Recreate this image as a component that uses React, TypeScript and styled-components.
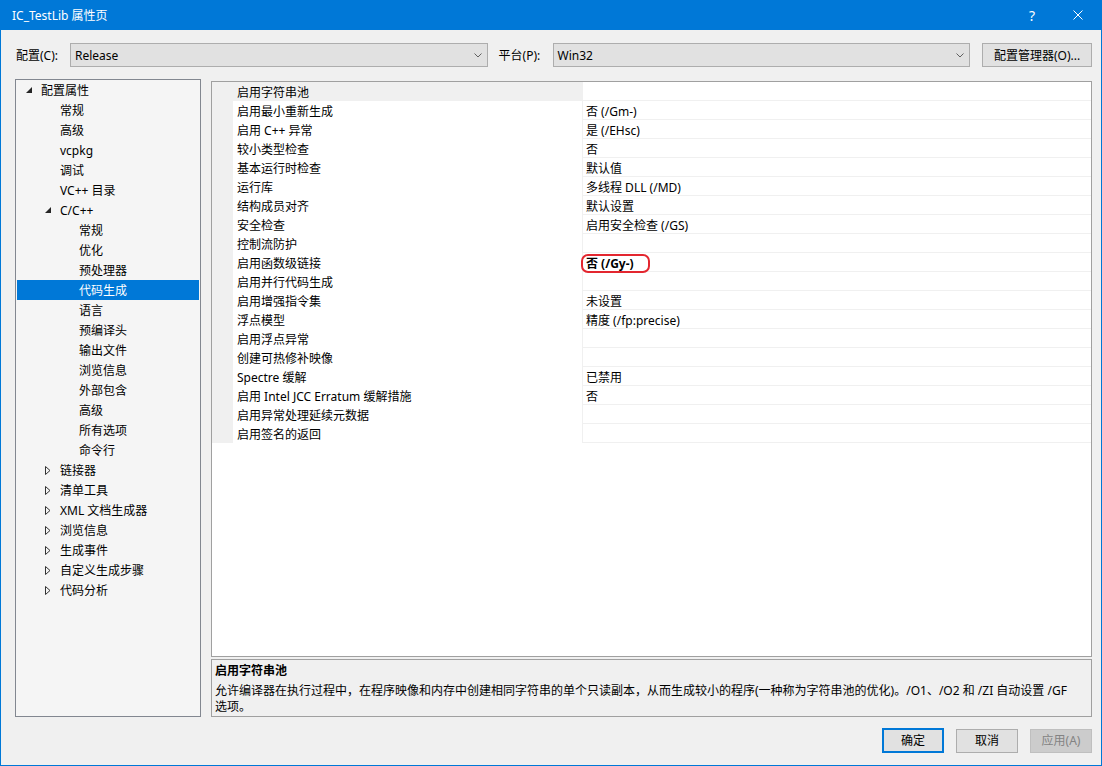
import React from "react";
import styled, { createGlobalStyle } from "styled-components";

const GlobalStyle = createGlobalStyle`
  html, body { margin: 0; padding: 0; }
  body {
    font-family: "Noto Sans", "Noto Sans CJK SC", sans-serif;
    font-size: 12px;
    color: #000;
    background: #ffffff;
  }
  #root { width: 1102px; height: 766px; }
  * { box-sizing: border-box; }
`;

const Window = styled.div`
  width: 1102px;
  height: 766px;
  border: 1px solid #0078d7;
  border-top: none;
  background: #f0f0f0;
  display: flex;
  flex-direction: column;
  overflow: hidden;
`;

const TitleBar = styled.div`
  height: 30px;
  flex: 0 0 30px;
  background: #0078d7;
  color: #fff;
  display: flex;
  align-items: center;
  padding-left: 11px;
`;

const TitleText = styled.div`
  flex: 1;
  font-size: 12px;
  line-height: 16px;
  padding-top: 1px;
`;

const CaptionButton = styled.div`
  width: 46px;
  height: 30px;
  display: flex;
  align-items: center;
  justify-content: center;
  color: #fff;
  font-size: 14px;
`;

const Body = styled.div`
  flex: 1;
  display: flex;
  flex-direction: column;
  padding: 13px 9px 0 14px;
`;

const ConfigRow = styled.div`
  display: flex;
  align-items: center;
  height: 24px;
`;

const FieldLabel = styled.div<{ $w: number }>`
  width: ${(p) => p.$w}px;
  line-height: 16px;
  padding: 2px 0 0 1px;
`;

const Combo = styled.div<{ $w: number }>`
  width: ${(p) => p.$w}px;
  height: 24px;
  background: #e1e1e1;
  border: 1px solid #adadad;
  display: flex;
  align-items: center;
  padding: 0 5px 0 4px;
`;

const ComboText = styled.div`
  flex: 1;
  line-height: 16px;
  padding-top: 2px;
`;

const Spacer = styled.div<{ $w: number }>`
  width: ${(p) => p.$w}px;
`;

const Button = styled.div<{ $w: number; $default?: boolean; $disabled?: boolean }>`
  width: ${(p) => p.$w}px;
  height: ${(p) => (p.$default ? 25 : 24)}px;
  background: ${(p) => (p.$disabled ? "#cccccc" : "#e1e1e1")};
  border: ${(p) =>
    p.$default ? "2px solid #0078d7" : p.$disabled ? "1px solid #bfbfbf" : "1px solid #adadad"};
  color: ${(p) => (p.$disabled ? "#838383" : "#000")};
  display: flex;
  align-items: center;
  justify-content: center;
  line-height: 16px;
  padding-top: 1px;
`;

const Main = styled.div`
  margin-top: 12px;
  height: 638px;
  display: flex;
  gap: 10px;
`;

const TreePanel = styled.div`
  width: 186px;
  height: 638px;
  background: #f5f5f5;
  border: 1px solid #828790;
  padding: 0 1px;
`;

const TreeItem = styled.div<{ $level: number; $selected?: boolean }>`
  height: 20px;
  display: flex;
  align-items: flex-start;
  padding-left: ${(p) => 9 + p.$level * 19}px;
  background: ${(p) => (p.$selected ? "#0078d7" : "transparent")};
  color: ${(p) => (p.$selected ? "#fff" : "#000")};
  white-space: nowrap;
`;

const ArrowSlot = styled.div`
  width: 15px;
  height: 20px;
  display: flex;
  align-items: center;
`;

const ItemText = styled.span`
  line-height: 16px;
  padding-top: 3px;
`;

const RightColumn = styled.div`
  width: 881px;
  margin-top: 2px;
  display: flex;
  flex-direction: column;
`;

const GridPanel = styled.div`
  height: 576px;
  border: 1px solid #a0a0a0;
  background: #fff;
  display: flex;
  align-items: flex-start;
`;

const Gutter = styled.div<{ $rows: number }>`
  width: 21px;
  background: #f0f0f0;
  height: ${(p) => p.$rows * 19}px;
`;

const Rows = styled.div`
  flex: 1;
  display: flex;
  flex-direction: column;
`;

const Row = styled.div`
  display: grid;
  grid-template-columns: 350px 1fr;
  height: 19px;
  border-bottom: 1px solid #f0f0f0;
`;

const NameCell = styled.div<{ $selected?: boolean }>`
  padding: 3px 0 0 4px;
  border-right: 1px solid #f0f0f0;
  background: ${(p) => (p.$selected ? "#f0f0f0" : "#fff")};
  line-height: 16px;
  white-space: nowrap;
`;

const ValueCell = styled.div`
  padding: 3px 0 0 3px;
  line-height: 16px;
  white-space: nowrap;
`;

const Highlight = styled.span`
  display: inline-flex;
  align-items: center;
  height: 19px;
  margin: -3px 0 0 -5px;
  padding: 1px 14px 0 3px;
  border: 2px solid #e3262f;
  border-radius: 7px;
  font-weight: bold;
`;

const DescPanel = styled.div`
  margin-top: 2px;
  height: 58px;
  border: 1px solid #a0a0a0;
  background: #f0f0f0;
  padding: 2px 0 0 3px;
`;

const DescTitle = styled.div`
  font-weight: bold;
  line-height: 18px;
`;

const DescText = styled.div`
  margin-top: 3px;
  line-height: 16px;
  white-space: nowrap;
`;

const ButtonRow = styled.div`
  margin-top: 11px;
  display: flex;
  justify-content: flex-end;
  align-items: center;
  gap: 12px;
`;

const Chevron = () => (
  <svg width="8" height="5" viewBox="0 0 8 5">
    <polyline points="0.5,0.5 4,4 7.5,0.5" fill="none" stroke="#606060" strokeWidth="1" />
  </svg>
);

const OpenArrow = ({ color }: { color: string }) => (
  <svg width="6" height="6" viewBox="0 0 6 6">
    <polygon points="6,0 6,6 0,6" fill={color} />
  </svg>
);

const ClosedArrow = ({ color }: { color: string }) => (
  <svg width="6" height="9" viewBox="0 0 6 9">
    <polygon points="0.5,0.5 5,4.5 0.5,8.5" fill="none" stroke={color} strokeWidth="1" />
  </svg>
);

type TreeNode = { label: string; level: number; arrow?: "open" | "closed"; selected?: boolean };

const tree: TreeNode[] = [
  { label: "配置属性", level: 0, arrow: "open" },
  { label: "常规", level: 1 },
  { label: "高级", level: 1 },
  { label: "vcpkg", level: 1 },
  { label: "调试", level: 1 },
  { label: "VC++ 目录", level: 1 },
  { label: "C/C++", level: 1, arrow: "open" },
  { label: "常规", level: 2 },
  { label: "优化", level: 2 },
  { label: "预处理器", level: 2 },
  { label: "代码生成", level: 2, selected: true },
  { label: "语言", level: 2 },
  { label: "预编译头", level: 2 },
  { label: "输出文件", level: 2 },
  { label: "浏览信息", level: 2 },
  { label: "外部包含", level: 2 },
  { label: "高级", level: 2 },
  { label: "所有选项", level: 2 },
  { label: "命令行", level: 2 },
  { label: "链接器", level: 1, arrow: "closed" },
  { label: "清单工具", level: 1, arrow: "closed" },
  { label: "XML 文档生成器", level: 1, arrow: "closed" },
  { label: "浏览信息", level: 1, arrow: "closed" },
  { label: "生成事件", level: 1, arrow: "closed" },
  { label: "自定义生成步骤", level: 1, arrow: "closed" },
  { label: "代码分析", level: 1, arrow: "closed" },
];

type Prop = { name: string; value: string; highlight?: boolean };

const props: Prop[] = [
  { name: "启用字符串池", value: "" },
  { name: "启用最小重新生成", value: "否 (/Gm-)" },
  { name: "启用 C++ 异常", value: "是 (/EHsc)" },
  { name: "较小类型检查", value: "否" },
  { name: "基本运行时检查", value: "默认值" },
  { name: "运行库", value: "多线程 DLL (/MD)" },
  { name: "结构成员对齐", value: "默认设置" },
  { name: "安全检查", value: "启用安全检查 (/GS)" },
  { name: "控制流防护", value: "" },
  { name: "启用函数级链接", value: "否 (/Gy-)", highlight: true },
  { name: "启用并行代码生成", value: "" },
  { name: "启用增强指令集", value: "未设置" },
  { name: "浮点模型", value: "精度 (/fp:precise)" },
  { name: "启用浮点异常", value: "" },
  { name: "创建可热修补映像", value: "" },
  { name: "Spectre 缓解", value: "已禁用" },
  { name: "启用 Intel JCC Erratum 缓解措施", value: "否" },
  { name: "启用异常处理延续元数据", value: "" },
  { name: "启用签名的返回", value: "" },
];

export default function App() {
  return (
    <>
      <GlobalStyle />
      <Window>
        <TitleBar>
          <TitleText>IC_TestLib 属性页</TitleText>
          <CaptionButton>?</CaptionButton>
          <CaptionButton>
            <svg width="10" height="10" viewBox="0 0 10 10">
              <path d="M0.5 0.5 L9.5 9.5 M9.5 0.5 L0.5 9.5" stroke="#fff" strokeWidth="1" />
            </svg>
          </CaptionButton>
        </TitleBar>
        <Body>
          <ConfigRow>
            <FieldLabel $w={55}>配置(C):</FieldLabel>
            <Combo $w={418}>
              <ComboText>Release</ComboText>
              <Chevron />
            </Combo>
            <Spacer $w={10} />
            <FieldLabel $w={55}>平台(P):</FieldLabel>
            <Combo $w={418}>
              <ComboText>Win32</ComboText>
              <Chevron />
            </Combo>
            <Spacer $w={12} />
            <Button $w={110}>配置管理器(O)...</Button>
          </ConfigRow>
          <Main>
            <TreePanel>
              {tree.map((n, i) => (
                <TreeItem key={i} $level={n.level} $selected={n.selected}>
                  <ArrowSlot>
                    {n.arrow === "open" && <OpenArrow color="#262626" />}
                    {n.arrow === "closed" && <ClosedArrow color="#333" />}
                  </ArrowSlot>
                  <ItemText>{n.label}</ItemText>
                </TreeItem>
              ))}
            </TreePanel>
            <RightColumn>
              <GridPanel>
                <Gutter $rows={props.length} />
                <Rows>
                  {props.map((p, i) => (
                    <Row key={i}>
                      <NameCell $selected={i === 0}>{p.name}</NameCell>
                      <ValueCell>
                        {p.highlight ? <Highlight>{p.value}</Highlight> : p.value}
                      </ValueCell>
                    </Row>
                  ))}
                </Rows>
              </GridPanel>
              <DescPanel>
                <DescTitle>启用字符串池</DescTitle>
                <DescText>
                  允许编译器在执行过程中，在程序映像和内存中创建相同字符串的单个只读副本，从而生成较小的程序(一种称为字符串池的优化)。/O1、/O2 和 /ZI 自动设置 /GF
                  <br />
                  选项。
                </DescText>
              </DescPanel>
            </RightColumn>
          </Main>
          <ButtonRow>
            <Button $w={62} $default>确定</Button>
            <Button $w={62}>取消</Button>
            <Button $w={62} $disabled>应用(A)</Button>
          </ButtonRow>
        </Body>
      </Window>
    </>
  );
}
